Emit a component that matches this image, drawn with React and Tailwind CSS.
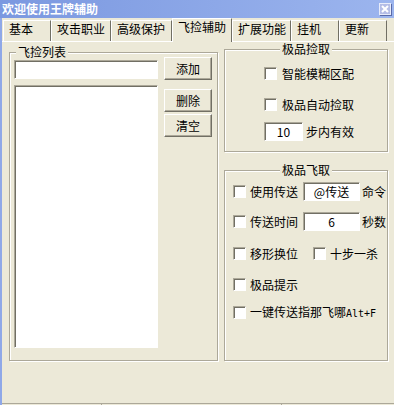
import React from "react";

// classic 3D borders
const raised =
  "border border-t-white border-l-white border-r-[#716f64] border-b-[#716f64] shadow-[inset_-1px_-1px_0_#aca899]";
const sunken =
  "border border-t-[#aca899] border-l-[#aca899] border-r-white border-b-white shadow-[inset_1px_1px_0_#716f64] bg-white";

function Check() {
  return <span className={`block w-[13px] h-[13px] shrink-0 ${sunken}`} />;
}

function Button({ children, className = "" }) {
  return (
    <button
      type="button"
      className={`w-[48px] h-[23px] bg-[#ece9d8] text-[12px] leading-[12px] ${raised} ${className}`}
    >
      {children}
    </button>
  );
}

function TextBox({ value = "", className = "" }) {
  return (
    <div className={`flex items-center justify-center text-[12px] leading-[12px] ${sunken} ${className}`}>
      {value}
    </div>
  );
}

function GroupBox({ title, center, className = "", children }) {
  return (
    <fieldset
      className={`border border-[#aca899] shadow-[inset_1px_1px_0_#fff,1px_1px_0_#fff] ${className}`}
    >
      <legend
        className={`${center ? "mx-auto" : "ml-[6px]"} px-[2px] text-[12px] leading-[10px] bg-[#ece9d8]`}
      >
        {title}
      </legend>
      {children}
    </fieldset>
  );
}

const tabs = [
  { label: "基本", w: "w-[48px]" },
  { label: "攻击职业", w: "w-[60px]" },
  { label: "高级保护", w: "w-[61px]" },
  { label: "飞捡辅助", w: "w-[60px]", active: true },
  { label: "扩展功能", w: "w-[59px]" },
  { label: "挂机", w: "w-[48px]" },
  { label: "更新", w: "w-[48px]" },
];

export default function App() {
  return (
    <div className="w-[394px] h-[405px] overflow-hidden flex flex-col bg-[#ece9d8] text-black font-['Noto_Sans_CJK_SC',sans-serif]">
      {/* title bar */}
      <div className="h-[18px] shrink-0 flex items-center justify-between pl-[2px] pr-[3px] bg-gradient-to-r from-[#7b98e0] to-[#9cb5ee]">
        <span className="text-white font-bold text-[12px] leading-[12px]">欢迎使用王牌辅助</span>
        <span className="w-[12px] h-[12px] flex items-center justify-center bg-[#b4bde6] border border-[#e8ecfa] shadow-[1px_1px_0_#5a6aa8]">
          <svg width="8" height="8" viewBox="0 0 8 8">
            <path d="M1 1 7 7M7 1 1 7" stroke="white" strokeWidth="2" />
          </svg>
        </span>
      </div>

      <div className="flex-1 flex flex-col border-l-2 border-[#8fa8e8]">
        {/* tab strip */}
        <div className="h-[23px] shrink-0 flex items-end pl-[1px]">
          {tabs.map((t) =>
            t.active ? (
              <div
                key={t.label}
                className={`${t.w} h-[24px] -mb-[1px] relative z-10 bg-[#ece9d8] border-t border-l border-t-white border-l-white border-r border-r-[#716f64] pl-[5px] pt-[2px] text-[12px] leading-[12px]`}
              >
                {t.label}
              </div>
            ) : (
              <div
                key={t.label}
                className={`${t.w} h-[21px] border-t border-l border-t-white border-l-white border-r border-r-[#716f64] pl-[5px] pt-[2px] text-[12px] leading-[12px]`}
              >
                {t.label}
              </div>
            )
          )}
        </div>

        {/* tab page */}
        <div className="flex-1 flex items-start border-t border-white pl-[7px] text-[12px] leading-[12px]">
          <GroupBox title="飞捡列表" className="mt-[5px] w-[209px] h-[314px]">
            <div className="flex pl-[4px]">
              <div className="flex flex-col w-[144px]">
                <TextBox className="mt-[3px] h-[19px]" />
                <div className={`mt-[6px] h-[263px] ${sunken}`} />
              </div>
              <div className="flex flex-col ml-[6px]">
                <Button>添加</Button>
                <Button className="mt-[9px]">删除</Button>
                <Button className="mt-[2px]">清空</Button>
              </div>
            </div>
          </GroupBox>

          <div className="ml-[6px] flex flex-col">
            <GroupBox title="极品捡取" center className="mt-[2px] w-[164px] h-[108px]">
              <div className="pl-[39px] flex flex-col">
                <label className="mt-[13px] h-[13px] flex items-center">
                  <Check />
                  <span className="ml-[5px]">智能模糊区配</span>
                </label>
                <label className="mt-[18px] h-[13px] flex items-center">
                  <Check />
                  <span className="ml-[5px]">极品自动捡取</span>
                </label>
                <div className="mt-[11px] h-[19px] flex items-center">
                  <TextBox value="10" className="w-[39px] h-[19px]" />
                  <span className="ml-[3px]">步内有效</span>
                </div>
              </div>
            </GroupBox>

            <GroupBox title="极品飞取" center className="mt-[13px] w-[164px] h-[196px]">
              <div className="pl-[8px] flex flex-col">
                <div className="mt-[7px] h-[19px] flex items-center">
                  <Check />
                  <span className="ml-[4px] w-[53px]">使用传送</span>
                  <TextBox value="@传送" className="w-[57px] h-[19px]" />
                  <span className="ml-[2px]">命令</span>
                </div>
                <div className="mt-[11px] h-[19px] flex items-center">
                  <Check />
                  <span className="ml-[4px] w-[53px]">传送时间</span>
                  <TextBox value="6" className="w-[57px] h-[19px]" />
                  <span className="ml-[2px]">秒数</span>
                </div>
                <div className="mt-[16px] h-[13px] flex items-center">
                  <Check />
                  <span className="ml-[4px] w-[63px]">移形换位</span>
                  <Check />
                  <span className="ml-[4px]">十步一杀</span>
                </div>
                <label className="mt-[18px] h-[13px] flex items-center">
                  <Check />
                  <span className="ml-[4px]">极品提示</span>
                </label>
                <label className="mt-[15px] h-[13px] flex items-center">
                  <Check />
                  <span className="ml-[4px]">
                    一键传送指那飞哪
                    <span className="font-['DejaVu_Sans_Mono',monospace] text-[10px]">Alt+F</span>
                  </span>
                </label>
              </div>
            </GroupBox>
          </div>
        </div>

        {/* bottom edge of status strip */}
        <div className="h-[2px] shrink-0 flex border-t border-[#aca899]">
          <div className="w-[100px] border-r border-[#aca899]" />
          <div className="w-[180px] border-r border-[#aca899]" />
          <div className="flex-1" />
        </div>
      </div>
    </div>
  );
}
